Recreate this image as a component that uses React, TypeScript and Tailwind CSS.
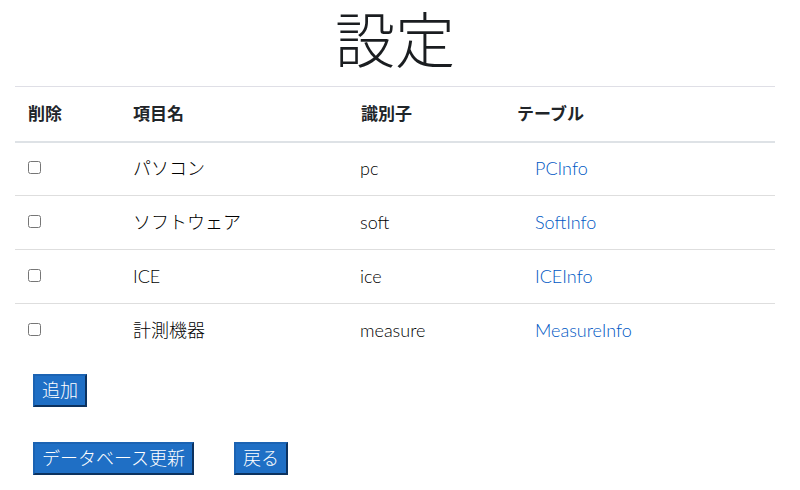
import React from 'react';

const rows = [
  { name: 'パソコン', id: 'pc', table: 'PCInfo' },
  { name: 'ソフトウェア', id: 'soft', table: 'SoftInfo' },
  { name: 'ICE', id: 'ice', table: 'ICEInfo' },
  { name: '計測機器', id: 'measure', table: 'MeasureInfo' },
];

function Btn({ children }: { children: React.ReactNode }) {
  return (
    <button className="h-[33px] px-[7px] bg-[#1f6fc5] text-white text-[18px] font-light leading-none border-2 border-t-[#1b63b3] border-l-[#1b63b3] border-b-[#0c325f] border-r-[#0c325f]">
      {children}
    </button>
  );
}

export default function App() {
  return (
    <div className="w-[790px] px-[15px] bg-white text-[#212529] font-['Lato','Noto_Sans_CJK_JP',sans-serif]">
      <h1 className="text-center text-[60px] font-light leading-[81px] h-[86px] text-[#1a1d20]">設定</h1>

      <table className="w-full table-fixed border-collapse">
        <thead>
          <tr className="border-t border-[#dfdfe6] border-b-2 border-b-[#dee2e6] h-[55px]">
            <th className="w-[106px] pl-[13px] text-left text-[17px] font-bold">削除</th>
            <th className="w-[228px] pl-[12px] text-left text-[17px] font-bold">項目名</th>
            <th className="w-[156px] pl-[12px] text-left text-[17px] font-bold">識別子</th>
            <th className="pl-[12px] text-left text-[17px] font-bold">テーブル</th>
          </tr>
        </thead>
        <tbody>
          {rows.map((r, i) => (
            <tr key={r.id} className={i < rows.length - 1 ? 'h-[54px] border-b border-[#dedede]' : 'h-[53px]'}>
              <td className="pl-[9px]">
                <input type="checkbox" className="m-[3px_3px_7px_4px] w-[13px] h-[13px] align-middle" />
              </td>
              <td className="pl-[12px] text-[18px] font-light text-black">{r.name}</td>
              <td className="pl-[11px] text-[18px] font-light text-black">{r.id}</td>
              <td className="pl-[30px] text-[18px] font-light">
                <a href="#" className="text-[#0058c4]">{r.table}</a>
              </td>
            </tr>
          ))}
        </tbody>
      </table>

      <div className="pl-[18px] pt-[17px]">
        <Btn>追加</Btn>
      </div>
      <div className="pl-[18px] pt-[35px] flex gap-[40px]">
        <Btn>データベース更新</Btn>
        <Btn>戻る</Btn>
      </div>
    </div>
  );
}
